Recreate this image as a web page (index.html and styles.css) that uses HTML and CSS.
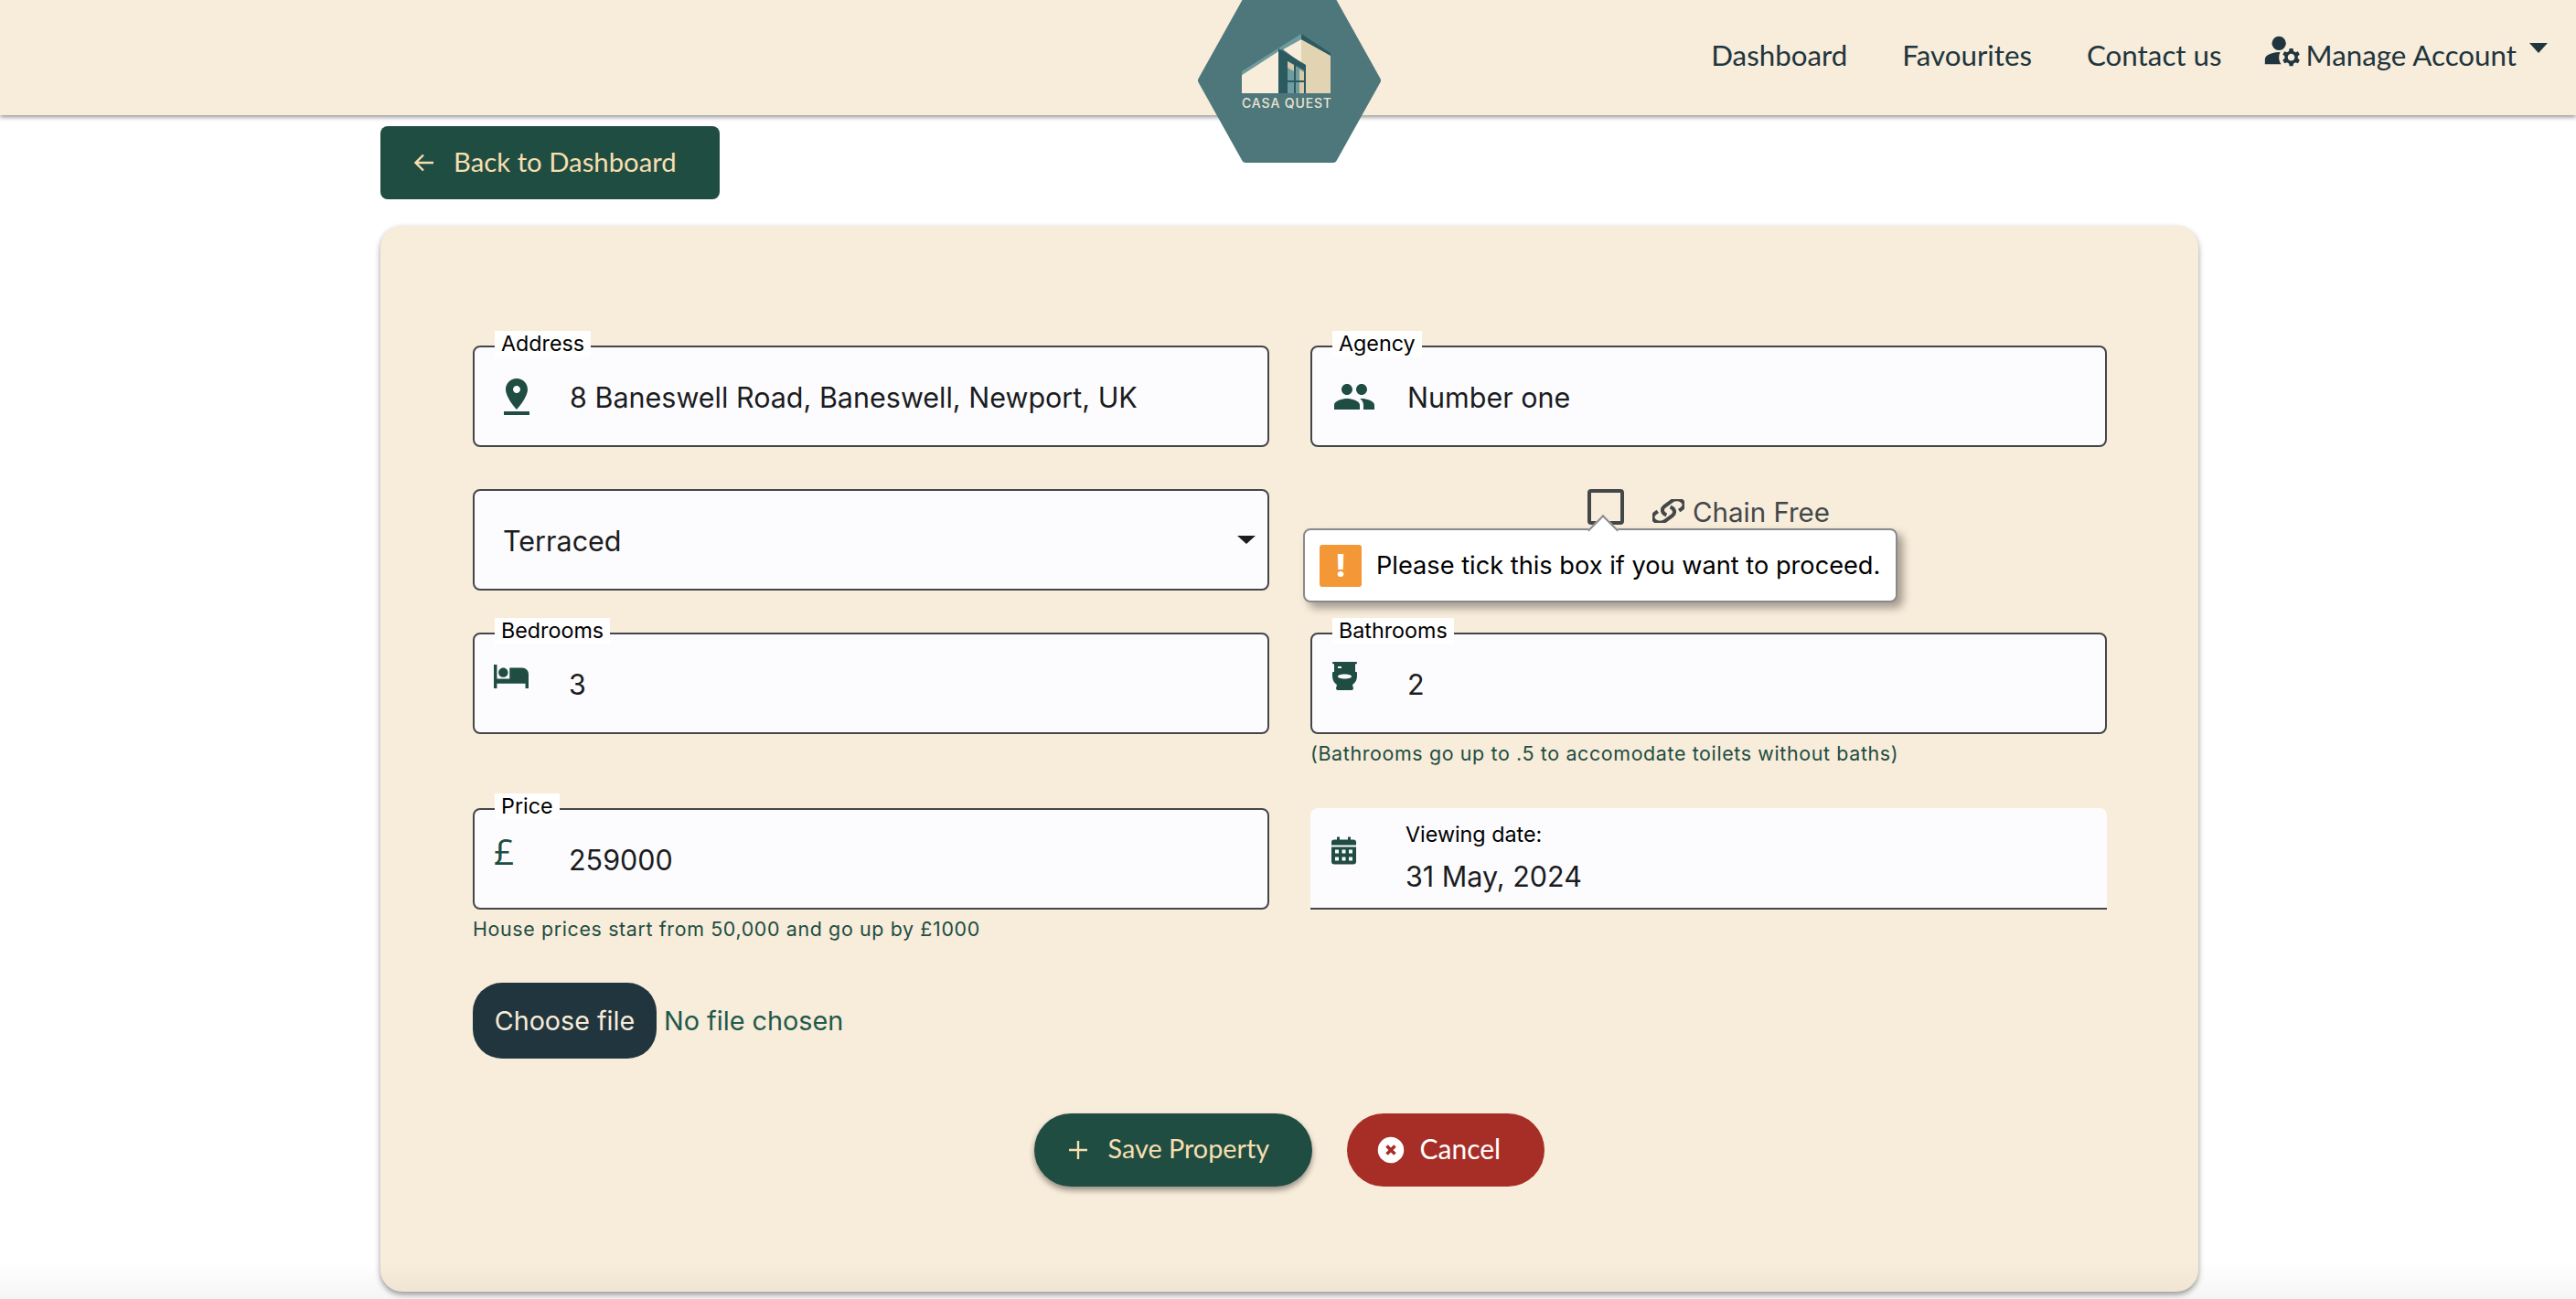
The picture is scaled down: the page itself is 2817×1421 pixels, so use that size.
FILE: index.html
```html
<!DOCTYPE html>
<html lang="en">
<head>
<meta charset="utf-8">
<title>Casa Quest</title>
<link rel="stylesheet" href="styles.css">
</head>
<body>
<header class="topbar">
  <svg class="logo" viewBox="0 0 200 180" aria-label="Casa Quest logo">
    <path class="hex" d="M52 4H148L196 90L148 176H52L4 90Z"/>
    <path fill="#f8ecda" d="M48 84L88 58V104H48Z"/>
    <path fill="#6f9c9e" d="M48 80L113 39V45L88 58L48 84Z"/>
    <path fill="#f8ecda" d="M93 56L113 45V71Z"/>
    <path fill="#e2d3b3" d="M113 45L145 62V104H118V74L113 71Z"/>
    <path fill="#2b5a60" d="M113 39L145 60V63L113 45Z"/>
    <path fill="#2b5a60" d="M88 55L118 73V104H88Z"/>
    <path fill="#6f9c9e" d="M98 69L105 73V90H98Z"/>
    <path fill="#6f9c9e" d="M107 74L116 79V90H107ZM98 92H105V104H98ZM107 92H116V104H107Z"/>
    <path fill="#d8c9a8" d="M111 78L116 81V90H111ZM111 92H116V104H111ZM98 69L105 73V80L98 76Z"/>
    <text class="logo-text" x="48" y="120" textLength="98">CASA QUEST</text>
  </svg>
  <nav class="nav">
    <a class="nav-link">Dashboard</a>
    <a class="nav-link">Favourites</a>
    <a class="nav-link">Contact us</a>
    <a class="nav-link nav-account">
      <svg class="nav-icon" viewBox="0 0 24 24"><circle cx="10" cy="8" r="4"/><path d="M10.67 13.02c-.22-.01-.44-.02-.67-.02-2.42 0-4.68.67-6.61 1.82-.88.52-1.39 1.5-1.39 2.53V20h9.26c-.79-1.13-1.26-2.51-1.26-4 0-1.07.25-2.07.67-2.98z"/><path d="M20.75 16c0-.22-.03-.42-.06-.63l1.14-1.01-1-1.73-1.45.49c-.32-.27-.68-.48-1.08-.63L18 11h-2l-.3 1.49c-.4.15-.76.36-1.08.63l-1.45-.49-1 1.73 1.14 1.01c-.03.21-.06.41-.06.63s.03.42.06.63l-1.14 1.01 1 1.73 1.45-.49c.32.27.68.48 1.08.63L16 21h2l.3-1.49c.4-.15.76-.36 1.08-.63l1.45.49 1-1.73-1.14-1.01c.03-.21.06-.41.06-.63zM17 18c-1.1 0-2-.9-2-2s.9-2 2-2 2 .9 2 2-.9 2-2 2z"/></svg>
      <span>Manage Account</span>
      <i class="nav-caret"></i>
    </a>
  </nav>
</header>

<main class="page">
  <a class="back-btn">
    <svg class="back-icon" viewBox="0 0 22 20"><path d="M21 10H2M10 1.500L1.500 10L10 18.500"/></svg>
    <span>Back to Dashboard</span>
  </a>

  <section class="card">
    <div class="grid">
      <div class="field">
        <span class="field-label">Address</span>
        <svg class="ico ico-lg" viewBox="0 0 24 24"><path d="M18 8c0-3.310-2.690-6-6-6S6 4.690 6 8c0 4.500 6 11 6 11s6-6.500 6-11zm-8 0c0-1.100.9-2 2-2s2 .9 2 2-.89 2-2 2c-1.100 0-2-.9-2-2zM5 20v2h14v-2H5z"/></svg>
        <span class="value">8 Baneswell Road, Baneswell, Newport, UK</span>
      </div>
      <div class="field">
        <span class="field-label">Agency</span>
        <svg class="ico ico-lg" viewBox="0 0 24 24"><path d="M16 11c1.660 0 2.990-1.340 2.990-3S17.660 5 16 5c-1.660 0-3 1.340-3 3s1.340 3 3 3zm-8 0c1.660 0 2.990-1.340 2.990-3S9.660 5 8 5C6.340 5 5 6.340 5 8s1.340 3 3 3zm0 2c-2.330 0-7 1.170-7 3.500V19h14v-2.500c0-2.330-4.670-3.500-7-3.500zm8 0c-.29 0-.62.02-.97.05 1.160.84 1.970 1.970 1.970 3.450V19h6v-2.500c0-2.330-4.670-3.500-7-3.500z"/></svg>
        <span class="value">Number one</span>
      </div>

      <div class="field field-select">
        <span class="value">Terraced</span>
        <i class="select-caret"></i>
      </div>
      <div class="check-cell">
        <span class="checkbox"></span>
        <svg class="link-icon" viewBox="2 2 20 20" preserveAspectRatio="none"><path d="M13.190 8.688a4.500 4.500 0 0 1 1.242 7.244l-4.500 4.500a4.500 4.500 0 0 1-6.364-6.364l1.757-1.757m13.350-.622 1.757-1.757a4.500 4.500 0 0 0-6.364-6.364l-4.500 4.500a4.500 4.500 0 0 0 1.242 7.244"/></svg>
        <span class="check-label">Chain Free</span>
        <div class="bubble">
          <span class="bubble-icon">!</span>
          <span>Please tick this box if you want to proceed.</span>
        </div>
      </div>

      <div class="stack">
        <div class="field">
          <span class="field-label">Bedrooms</span>
          <svg class="ico ico-bed" viewBox="1 5 22 15"><path d="M7 13c1.660 0 3-1.340 3-3S8.660 7 7 7s-3 1.340-3 3 1.340 3 3 3zm12-6h-8v7H3V5H1v15h2v-3h18v3h2v-9c0-2.210-1.790-4-4-4z"/></svg>
          <span class="value">3</span>
        </div>
      </div>
      <div class="stack">
        <div class="field">
          <span class="field-label">Bathrooms</span>
          <svg class="ico ico-small" viewBox="0 0 27 31"><path fill-rule="evenodd" d="M0 1Q0 0 1 0H26Q27 0 27 1V2Q25 2 25 3V11H26Q27 11 27 12V15C27 20 25 23 22 25L23 29Q23 31 21 31H6Q4 31 4 29L5 25C2 23 0 20 0 15V12Q0 11 1 11H2V3Q2 2 0 2ZM6 5V7H10V5ZM6 16C6 17.500 9 18.500 13.500 18.500S21 17.500 21 16 18 13.500 13.500 13.500 6 14.500 6 16Z"/></svg>
          <span class="value">2</span>
        </div>
        <p class="helper">(Bathrooms go up to .5 to accomodate toilets without baths)</p>
      </div>

      <div class="stack">
        <div class="field">
          <span class="field-label">Price</span>
          <span class="ico-pound">£</span>
          <span class="value">259000</span>
        </div>
        <p class="helper">House prices start from 50,000 and go up by £1000</p>
      </div>
      <div class="date-field">
        <svg class="ico ico-small" viewBox="0 0 27 30"><path fill-rule="evenodd" d="M6 0H9V3H18V0H21V3H24Q27 3 27 6V9H0V6Q0 3 3 3H6ZM0 11H27V27Q27 30 24 30H3Q0 30 0 27ZM4 14V18H8V14ZM11.500 14V18H15.500V14ZM19 14V18H23V14ZM4 22V26H8V22ZM11.500 22V26H15.500V22ZM19 22V26H23V22Z"/></svg>
        <div class="date-text">
          <span class="date-label">Viewing date:</span>
          <span class="value">31 May, 2024</span>
        </div>
      </div>
    </div>

    <div class="file-row">
      <span class="file-btn">Choose file</span>
      <span class="file-name">No file chosen</span>
    </div>

    <div class="actions">
      <a class="pill pill-save">
        <svg class="plus" viewBox="0 0 20 20"><path d="M10 0V20M0 10H20"/></svg>
        <span>Save Property</span>
      </a>
      <a class="pill pill-cancel">
        <svg class="cancel-icon" viewBox="0 0 32 32"><circle cx="16" cy="16" r="16" fill="#fff"/><path d="M11.500 11.500L20.500 20.500M20.500 11.500L11.500 20.500"/></svg>
        <span>Cancel</span>
      </a>
    </div>
  </section>
</main>
<div class="bottom-fade"></div>
</body>
</html>
```
FILE: styles.css
```css
* { box-sizing: border-box; }
html, body { margin: 0; height: 100%; overflow: hidden; background: #fff; }
body { font-family: Inter, "Liberation Sans", sans-serif; color: #1b1c1e; }

.topbar {
  position: relative;
  height: 126px;
  background: #f8ecda;
  box-shadow: 0 2px 5px rgba(0,0,0,.45);
  display: flex;
  justify-content: flex-end;
  z-index: 2;
}
.logo { position: absolute; left: 1310px; top: -2px; width: 200px; height: 180px; }
.hex { fill: #4d777b; stroke: #4d777b; stroke-width: 8; stroke-linejoin: round; }
.logo-text { font: 500 14px Inter, sans-serif; fill: #ece4d2; }

.nav { display: flex; align-items: center; gap: 60px; padding: 0 31px 6px 0; height: 126px; }
.nav-link { font: 400 31.300px Lato, sans-serif; color: #20353d; white-space: nowrap; }
.nav-account { display: flex; align-items: center; margin-left: -17px; }
.nav-icon { width: 46px; height: 46px; fill: #20353d; margin: -10px 3px 0 0; }
.nav-caret { width: 0; height: 0; border: 10px solid transparent; border-top: 11px solid #20353d; border-bottom: 0; margin: -16px 0 0 14px; }

.page { padding: 12px 413px 0 416px; }
.back-btn {
  display: flex; align-items: center; gap: 21px;
  height: 80px; width: 371px; padding: 0 0 3px 37px;
  background: #204d42; color: #f7dfb0; border-radius: 8px;
  font: 400 29.300px Lato, sans-serif; white-space: nowrap;
}
.back-icon { width: 22px; height: 20px; fill: none; stroke: #f7dfb0; stroke-width: 2.400; margin-top: 3px; }

.card {
  margin-top: 29px;
  height: 1166px;
  background: #f8ecda;
  border-radius: 24px;
  box-shadow: 0 3px 6px rgba(0,0,0,.4);
  padding: 131px 101px 0;
}
.grid { display: grid; grid-template-columns: 871px 871px; column-gap: 45px; row-gap: 46px; grid-auto-rows: min-content; }
.stack { height: 146px; }

.field {
  position: relative;
  display: flex; align-items: center;
  height: 111px;
  background: #fcfcff;
  border: 2px solid #43474a;
  border-radius: 8px;
  padding-left: 22px;
}
.field-label {
  position: absolute; left: 22px; top: -18px;
  padding: 0 7px; height: 28px; line-height: 28px;
  background: #fff; color: #000; font-size: 23.300px; white-space: nowrap;
}
.value { font-size: 30.500px; line-height: 40px; padding-top: 2px; color: #1b1c1e; white-space: nowrap; }
.ico { fill: #204d42; flex: none; }
.ico-lg { width: 48px; height: 48px; margin-right: 34px; }
.ico-bed { width: 38px; height: 26px; margin: -16px 44px 0 -1px; }
.ico-small { width: 27px; height: 31px; margin: -17px 55px 0 0; }
.ico-pound { width: 82px; margin: -17px 0 0 -1px; font: 500 39px "Open Sans", sans-serif; color: #204d42; line-height: 40px; }

.field-select { padding-left: 31px; justify-content: space-between; padding-right: 13px; }
.select-caret { width: 0; height: 0; border: 10px solid transparent; border-top: 9px solid #1b1c1e; border-bottom: 0; }

.check-cell { position: relative; display: flex; justify-content: center; align-items: flex-start; height: 111px; }
.checkbox { width: 40px; height: 39px; border: 4px solid #43474a; border-radius: 4px; margin-right: 31px; }
.link-icon { width: 35px; height: 26px; fill: none; stroke: #43474a; margin: 11px 9px 0 0; }
.link-icon path { stroke-width: 4px; vector-effect: non-scaling-stroke; }
.check-label { font-size: 29.500px; line-height: 40px; color: #43474a; margin-top: 5px; }

.bubble {
  position: absolute; left: -8px; top: 43px;
  display: flex; align-items: center; gap: 16px;
  width: 650px; height: 81px; padding-left: 16px;
  background: #fff; border: 2px solid #8a8a8a; border-radius: 8px;
  box-shadow: 6px 6px 10px rgba(0,0,0,.35);
  font-size: 27.200px; color: #000; white-space: nowrap;
}
.bubble::before {
  content: ""; position: absolute; left: 314px; top: -12px;
  width: 22px; height: 22px; background: #fff;
  border-left: 2px solid #8a8a8a; border-top: 2px solid #8a8a8a;
  transform: rotate(45deg);
}
.bubble-icon {
  display: flex; align-items: center; justify-content: center;
  width: 46px; height: 46px; flex: none;
  background: #f49737; border-radius: 3px;
  color: #fff; font-weight: 800; font-size: 34px;
}

.helper { margin: 0; padding-top: 6px; font-size: 21.400px; line-height: 30px; letter-spacing: .03em; color: #204d42; }

.date-field {
  display: flex; align-items: center;
  height: 111px; padding-left: 23px;
  background: #fcfcff;
  border-bottom: 2px solid #43474a;
  border-radius: 8px 8px 0 0;
}
.date-field .ico-small { margin-right: 54px; }
.date-text { display: flex; flex-direction: column; gap: 9px; }
.date-label { font-size: 23.300px; line-height: 30px; color: #000; }

.file-row { display: flex; align-items: center; gap: 8px; margin-top: 45px; }
.file-btn {
  display: flex; align-items: center; justify-content: center;
  width: 201px; height: 83px;
  background: #20353d; color: #f8ecda;
  border-radius: 32px; font-size: 28.700px;
}
.file-name { font-size: 28.800px; color: #20594a; }

.actions { display: flex; justify-content: center; gap: 38px; margin-top: 60px; padding-right: 1px; }
.pill {
  display: flex; align-items: center;
  height: 80px; border-radius: 40px;
  font: 400 30px Lato, sans-serif; white-space: nowrap;
}
.pill span { margin-top: -5px; }
.pill-save { width: 304px; padding-left: 38px; gap: 23px; background: #204d42; color: #f7dfb0; box-shadow: 0 4px 6px rgba(0,0,0,.4); font-size: 28.800px; }
.pill-cancel { width: 216px; padding-left: 32px; gap: 16px; background: #a72e26; color: #fff; }
.plus { width: 20px; height: 20px; fill: none; stroke: #f7dfb0; stroke-width: 2.400; }
.cancel-icon { width: 32px; height: 32px; fill: none; stroke: #a72e26; stroke-width: 3.500; }

.bottom-fade {
  position: fixed; left: 0; right: 0; bottom: 0; height: 40px;
  background: linear-gradient(rgba(0,0,0,0), rgba(0,0,0,.04));
  pointer-events: none;
}
```
